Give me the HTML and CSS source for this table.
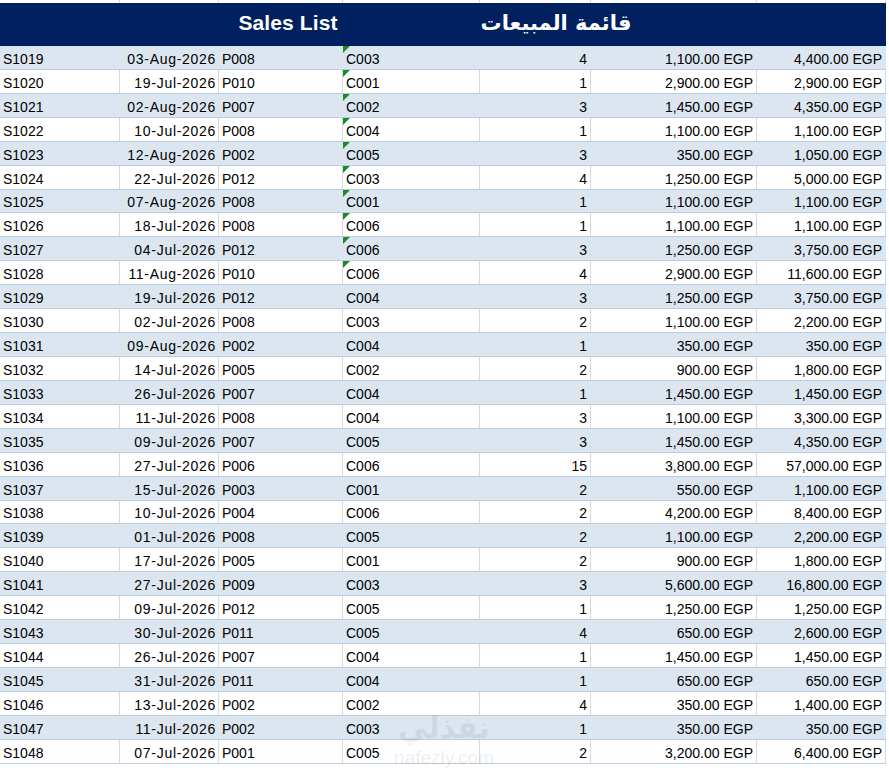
FILE: index.html
```html
<!DOCTYPE html>
<html lang="en">
<head>
<meta charset="utf-8">
<title>Sales List</title>
<link rel="stylesheet" href="styles.css">
</head>
<body>
<div class="sheet">
  <div class="strip">
    <div class="c"></div><div class="c"></div><div class="c"></div><div class="c"></div><div class="c"></div><div class="c"></div><div class="c"></div>
  </div>
  <div class="banner">
    <div class="title-en">Sales List</div>
    <div class="title-ar" lang="ar" dir="rtl">قائمة المبيعات</div>
  </div>
  <div class="table">
    <div class="row alt"><div class="c">S1019</div><div class="c r d">03-Aug-2026</div><div class="c">P008</div><div class="c flag">C003</div><div class="c r">4</div><div class="c r">1,100.00 EGP</div><div class="c r">4,400.00 EGP</div></div>
    <div class="row"><div class="c">S1020</div><div class="c r d">19-Jul-2026</div><div class="c">P010</div><div class="c flag">C001</div><div class="c r">1</div><div class="c r">2,900.00 EGP</div><div class="c r">2,900.00 EGP</div></div>
    <div class="row alt"><div class="c">S1021</div><div class="c r d">02-Aug-2026</div><div class="c">P007</div><div class="c flag">C002</div><div class="c r">3</div><div class="c r">1,450.00 EGP</div><div class="c r">4,350.00 EGP</div></div>
    <div class="row"><div class="c">S1022</div><div class="c r d">10-Jul-2026</div><div class="c">P008</div><div class="c flag">C004</div><div class="c r">1</div><div class="c r">1,100.00 EGP</div><div class="c r">1,100.00 EGP</div></div>
    <div class="row alt"><div class="c">S1023</div><div class="c r d">12-Aug-2026</div><div class="c">P002</div><div class="c flag">C005</div><div class="c r">3</div><div class="c r">350.00 EGP</div><div class="c r">1,050.00 EGP</div></div>
    <div class="row"><div class="c">S1024</div><div class="c r d">22-Jul-2026</div><div class="c">P012</div><div class="c flag">C003</div><div class="c r">4</div><div class="c r">1,250.00 EGP</div><div class="c r">5,000.00 EGP</div></div>
    <div class="row alt"><div class="c">S1025</div><div class="c r d">07-Aug-2026</div><div class="c">P008</div><div class="c flag">C001</div><div class="c r">1</div><div class="c r">1,100.00 EGP</div><div class="c r">1,100.00 EGP</div></div>
    <div class="row"><div class="c">S1026</div><div class="c r d">18-Jul-2026</div><div class="c">P008</div><div class="c flag">C006</div><div class="c r">1</div><div class="c r">1,100.00 EGP</div><div class="c r">1,100.00 EGP</div></div>
    <div class="row alt"><div class="c">S1027</div><div class="c r d">04-Jul-2026</div><div class="c">P012</div><div class="c flag">C006</div><div class="c r">3</div><div class="c r">1,250.00 EGP</div><div class="c r">3,750.00 EGP</div></div>
    <div class="row"><div class="c">S1028</div><div class="c r d">11-Aug-2026</div><div class="c">P010</div><div class="c flag">C006</div><div class="c r">4</div><div class="c r">2,900.00 EGP</div><div class="c r">11,600.00 EGP</div></div>
    <div class="row alt"><div class="c">S1029</div><div class="c r d">19-Jul-2026</div><div class="c">P012</div><div class="c">C004</div><div class="c r">3</div><div class="c r">1,250.00 EGP</div><div class="c r">3,750.00 EGP</div></div>
    <div class="row"><div class="c">S1030</div><div class="c r d">02-Jul-2026</div><div class="c">P008</div><div class="c">C003</div><div class="c r">2</div><div class="c r">1,100.00 EGP</div><div class="c r">2,200.00 EGP</div></div>
    <div class="row alt"><div class="c">S1031</div><div class="c r d">09-Aug-2026</div><div class="c">P002</div><div class="c">C004</div><div class="c r">1</div><div class="c r">350.00 EGP</div><div class="c r">350.00 EGP</div></div>
    <div class="row"><div class="c">S1032</div><div class="c r d">14-Jul-2026</div><div class="c">P005</div><div class="c">C002</div><div class="c r">2</div><div class="c r">900.00 EGP</div><div class="c r">1,800.00 EGP</div></div>
    <div class="row alt"><div class="c">S1033</div><div class="c r d">26-Jul-2026</div><div class="c">P007</div><div class="c">C004</div><div class="c r">1</div><div class="c r">1,450.00 EGP</div><div class="c r">1,450.00 EGP</div></div>
    <div class="row"><div class="c">S1034</div><div class="c r d">11-Jul-2026</div><div class="c">P008</div><div class="c">C004</div><div class="c r">3</div><div class="c r">1,100.00 EGP</div><div class="c r">3,300.00 EGP</div></div>
    <div class="row alt"><div class="c">S1035</div><div class="c r d">09-Jul-2026</div><div class="c">P007</div><div class="c">C005</div><div class="c r">3</div><div class="c r">1,450.00 EGP</div><div class="c r">4,350.00 EGP</div></div>
    <div class="row"><div class="c">S1036</div><div class="c r d">27-Jul-2026</div><div class="c">P006</div><div class="c">C006</div><div class="c r">15</div><div class="c r">3,800.00 EGP</div><div class="c r">57,000.00 EGP</div></div>
    <div class="row alt"><div class="c">S1037</div><div class="c r d">15-Jul-2026</div><div class="c">P003</div><div class="c">C001</div><div class="c r">2</div><div class="c r">550.00 EGP</div><div class="c r">1,100.00 EGP</div></div>
    <div class="row"><div class="c">S1038</div><div class="c r d">10-Jul-2026</div><div class="c">P004</div><div class="c">C006</div><div class="c r">2</div><div class="c r">4,200.00 EGP</div><div class="c r">8,400.00 EGP</div></div>
    <div class="row alt"><div class="c">S1039</div><div class="c r d">01-Jul-2026</div><div class="c">P008</div><div class="c">C005</div><div class="c r">2</div><div class="c r">1,100.00 EGP</div><div class="c r">2,200.00 EGP</div></div>
    <div class="row"><div class="c">S1040</div><div class="c r d">17-Jul-2026</div><div class="c">P005</div><div class="c">C001</div><div class="c r">2</div><div class="c r">900.00 EGP</div><div class="c r">1,800.00 EGP</div></div>
    <div class="row alt"><div class="c">S1041</div><div class="c r d">27-Jul-2026</div><div class="c">P009</div><div class="c">C003</div><div class="c r">3</div><div class="c r">5,600.00 EGP</div><div class="c r">16,800.00 EGP</div></div>
    <div class="row"><div class="c">S1042</div><div class="c r d">09-Jul-2026</div><div class="c">P012</div><div class="c">C005</div><div class="c r">1</div><div class="c r">1,250.00 EGP</div><div class="c r">1,250.00 EGP</div></div>
    <div class="row alt"><div class="c">S1043</div><div class="c r d">30-Jul-2026</div><div class="c">P011</div><div class="c">C005</div><div class="c r">4</div><div class="c r">650.00 EGP</div><div class="c r">2,600.00 EGP</div></div>
    <div class="row"><div class="c">S1044</div><div class="c r d">26-Jul-2026</div><div class="c">P007</div><div class="c">C004</div><div class="c r">1</div><div class="c r">1,450.00 EGP</div><div class="c r">1,450.00 EGP</div></div>
    <div class="row alt"><div class="c">S1045</div><div class="c r d">31-Jul-2026</div><div class="c">P011</div><div class="c">C004</div><div class="c r">1</div><div class="c r">650.00 EGP</div><div class="c r">650.00 EGP</div></div>
    <div class="row"><div class="c">S1046</div><div class="c r d">13-Jul-2026</div><div class="c">P002</div><div class="c">C002</div><div class="c r">4</div><div class="c r">350.00 EGP</div><div class="c r">1,400.00 EGP</div></div>
    <div class="row alt"><div class="c">S1047</div><div class="c r d">11-Jul-2026</div><div class="c">P002</div><div class="c">C003</div><div class="c r">1</div><div class="c r">350.00 EGP</div><div class="c r">350.00 EGP</div></div>
    <div class="row"><div class="c">S1048</div><div class="c r d">07-Jul-2026</div><div class="c">P001</div><div class="c">C005</div><div class="c r">2</div><div class="c r">3,200.00 EGP</div><div class="c r">6,400.00 EGP</div></div>
  </div>
  <div class="watermark" aria-hidden="true">
    <div class="wm-ar" lang="ar" dir="rtl">نفذلي</div>
    <div class="wm-en">nafezly.com</div>
  </div>
</div>
</body>
</html>
```
FILE: styles.css
```css
html, body {
  margin: 0;
  padding: 0;
  background: #ffffff;
}

body {
  font-family: "Liberation Sans", Arial, sans-serif;
  font-size: 14px;
  color: #000000;
  overflow: hidden;
}

.sheet {
  position: relative;
  width: 886px;
  height: 768px;
}

.strip,
.row {
  display: grid;
  grid-template-columns: 120px 99px 124px 137px 111px 166px 129px;
}

.strip {
  height: 3px;
}

.strip .c {
  border-right: 1px solid #d9d9d9;
}

.banner {
  height: 43px;
  box-sizing: border-box;
  padding-bottom: 3px;
  background: #002060;
  color: #ffffff;
  display: flex;
  align-items: center;
  padding-left: 188px;
  gap: 68px;
}

.title-en {
  width: 200px;
  text-align: center;
  font-family: "Liberation Sans", Arial, sans-serif;
  font-weight: bold;
  font-size: 21px;
  letter-spacing: 0.1px;
}

.title-ar {
  width: 200px;
  text-align: center;
  font-family: "DejaVu Sans", "Noto Sans", sans-serif;
  font-weight: bold;
  font-size: 21px;
  padding-bottom: 1px;
}

.row {
  height: 23.93px;
  box-sizing: border-box;
  border-bottom: 1px solid #b8cce4;
  background: #ffffff;
}

.row.alt {
  background: #dce6f1;
}

.c {
  position: relative;
  display: flex;
  align-items: flex-end;
  justify-content: flex-start;
  padding: 0 3px 2px 3px;
  white-space: nowrap;
  overflow: hidden;
  box-sizing: border-box;
}

.row .c {
  border-right: 1px solid #d9d9d9;
}

.row.alt .c {
  border-right-color: #dce6f1;
}

.c.r {
  justify-content: flex-end;
}

.c.d {
  letter-spacing: 0.7px;
  padding-left: 0;
  padding-right: 2px;
}

.c.flag::before {
  content: "";
  position: absolute;
  left: 0;
  top: 0;
  width: 0;
  height: 0;
  border-top: 7px solid #1f8a24;
  border-right: 7px solid transparent;
}

.watermark {
  position: absolute;
  left: 388px;
  top: 708px;
  width: 112px;
  text-align: center;
  color: rgba(110, 110, 110, 0.12);
  pointer-events: none;
}

.wm-ar {
  font-family: "DejaVu Sans", sans-serif;
  font-weight: bold;
  font-size: 30px;
  line-height: 40px;
}

.wm-en {
  font-family: "Liberation Sans", Arial, sans-serif;
  font-size: 19px;
  line-height: 20px;
}
```
